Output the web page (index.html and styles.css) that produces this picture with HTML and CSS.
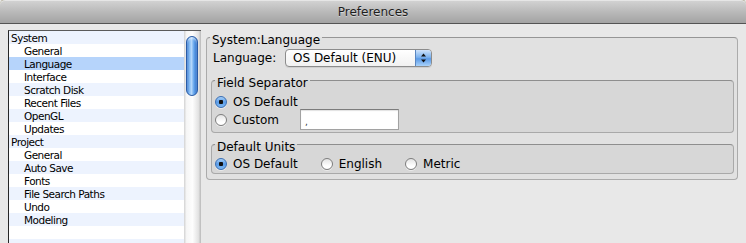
FILE: index.html
```html
<!DOCTYPE html>
<html lang="en">
<head>
    <meta charset="UTF-8">
    <title>Preferences</title>
    <link rel="stylesheet" href="styles.css">
</head>
<body>
    <div class="window">
        <div class="titlebar">Preferences</div>
        <div class="main">
            <div class="sidebar">
                <ul class="tree">
                    <li class="group">System</li>
                    <li>General</li>
                    <li class="selected">Language</li>
                    <li>Interface</li>
                    <li>Scratch Disk</li>
                    <li>Recent Files</li>
                    <li>OpenGL</li>
                    <li>Updates</li>
                    <li class="group">Project</li>
                    <li>General</li>
                    <li>Auto Save</li>
                    <li>Fonts</li>
                    <li>File Search Paths</li>
                    <li>Undo</li>
                    <li>Modeling</li>
                    <li></li>
                    <li></li>
                </ul>
                <div class="scrollbar"><div class="thumb"></div></div>
            </div>

            <div class="panel">
                <fieldset class="group-box">
                    <legend>System:Language</legend>
                    <div class="field-row">
                        <label class="field-label">Language:</label>
                        <div class="popup">
                            <span class="popup-value">OS Default (ENU)</span>
                            <span class="stepper">
                                <svg width="7" height="10" viewBox="0 0 7 10">
                                    <path d="M3.5 0.5 L6 3.5 L1 3.5 Z" fill="#111"/>
                                    <path d="M3.5 9.5 L6 6.5 L1 6.5 Z" fill="#111"/>
                                </svg>
                            </span>
                        </div>
                    </div>

                    <fieldset class="group-box inner separator">
                        <legend>Field Separator</legend>
                        <div class="radio-row first">
                            <span class="radio checked"></span>
                            <span class="radio-text">OS Default</span>
                        </div>
                        <div class="radio-row">
                            <span class="radio"></span>
                            <span class="radio-text">Custom</span>
                            <input class="text-field" type="text" value=",">
                        </div>
                    </fieldset>

                    <fieldset class="group-box inner units">
                        <legend>Default Units</legend>
                        <div class="radio-line">
                            <div class="radio-item">
                                <span class="radio checked"></span>
                                <span class="radio-text">OS Default</span>
                            </div>
                            <div class="radio-item">
                                <span class="radio"></span>
                                <span class="radio-text">English</span>
                            </div>
                            <div class="radio-item">
                                <span class="radio"></span>
                                <span class="radio-text">Metric</span>
                            </div>
                        </div>
                    </fieldset>
                </fieldset>
            </div>
        </div>
    </div>
</body>
</html>
```

FILE: styles.css
```css
html, body {
    margin: 0;
    padding: 0;
    height: 100%;
    overflow: hidden;
}
body {
    font-family: 'DejaVu Sans', sans-serif;
    font-size: 12px;
    color: #000;
    background: #e8e8e8;
}
.window {
    height: 100%;
    display: flex;
    flex-direction: column;
}
.titlebar {
    height: 22px;
    padding-top: 1px;
    line-height: 23px;
    text-align: center;
    color: #1e1e1e;
    text-shadow: 0 1px 0 rgba(255, 255, 255, 0.45);
    background: linear-gradient(#d4d4d4, #bababa 50%, #a3a3a3);
    border-top: 1px solid #b3ae95;
    border-bottom: 1px solid #545454;
    border-radius: 5px 5px 0 0;
    box-shadow: inset 0 1px 0 #e6e6e6;
    flex: none;
    margin-top: -1px;
}
.main {
    flex: 1;
    display: flex;
    align-items: flex-start;
    min-height: 0;
    overflow: hidden;
}

/* source list */
.sidebar {
    margin: 6px 0 0 8px;
    align-self: stretch;
    display: flex;
    overflow: hidden;
    border-left: 1px solid #262626;
    border-top: 1px solid #5a5a5a;
    background: #fff;
}
.tree {
    list-style: none;
    margin: 0;
    padding: 0;
    width: 175px;
    font-size: 10.5px;
    letter-spacing: -0.5px;
}
.tree li {
    height: 12px;
    padding: 1px 0 0 15px;
    line-height: 12px;
    white-space: nowrap;
}
.tree li:nth-child(odd) {
    background: #edf3fe;
}
.tree li.group {
    padding-left: 2px;
}
.tree li.selected {
    background: #b6d4fb;
}
.scrollbar {
    width: 17px;
    background: linear-gradient(90deg, #d2d2d2, #f6f6f6 15%, #fdfdfd 50%, #e2e2e2 85%, #b9b9b9);
    padding-top: 5px;
    box-sizing: border-box;
}
.thumb {
    width: 12px;
    height: 60px;
    margin-left: 2px;
    border-radius: 6px;
    border: 1px solid #2a5ca6;
    box-sizing: border-box;
    background: linear-gradient(90deg, #3a7bd1, #86bcf3 25%, #b4d7fb 45%, #62a4ec 70%, #2c6bc4);
    box-shadow: inset 0 2px 2px rgba(255, 255, 255, 0.5);
}

/* right panel */
.panel {
    margin: 3px 8px 0 5px;
    flex: 1;
}
.group-box {
    margin: 0;
    padding: 0 3px 5px 4px;
    border: 1px solid #ababab;
    border-top-color: #969696;
    border-radius: 4px;
    background: #e1e1e1;
    min-width: 0;
}
.group-box legend {
    padding: 6px 2px 0;
    margin-left: -1px;
    line-height: 14px;
}
.field-row {
    display: flex;
    align-items: center;
    height: 18px;
    margin-top: 2px;
    padding-left: 2px;
}
.field-label {
    width: 72px;
}
.popup {
    width: 147px;
    height: 18px;
    box-sizing: border-box;
    border: 1px solid #8c8c8c;
    border-radius: 4px;
    background: linear-gradient(#ffffff, #f1f1f1);
    display: flex;
    align-items: center;
    justify-content: space-between;
    box-shadow: 0 1px 0 rgba(0, 0, 0, 0.08);
    overflow: hidden;
}
.popup-value {
    padding-left: 7px;
}
.stepper {
    width: 15px;
    height: 16px;
    display: flex;
    align-items: center;
    justify-content: center;
    border-left: 1px solid #5a86c0;
    background: linear-gradient(#cfe3fb, #7db3ef 45%, #5b9ae6 55%, #a9d2fa);
}

.group-box.inner {
    padding: 0 3px 2px 3px;
    border-color: #a9a9a9;
    border-top-color: #8e8e8e;
    background: #d7d7d7;
}
.group-box.inner legend {
    margin-left: 0;
}
.separator {
    margin-top: 3px;
}
.separator .radio-row.first {
    margin-top: 4px;
    height: 15px;
}
.radio-row {
    display: flex;
    align-items: center;
    height: 21px;
}
.units {
    margin-top: 1px;
}
.units.group-box.inner {
    padding-bottom: 1px;
}
.radio-line {
    display: flex;
    align-items: center;
    height: 16px;
    margin-top: 2px;
    gap: 23px;
}
.radio-item {
    display: flex;
    align-items: center;
}
.radio {
    width: 12px;
    height: 12px;
    box-sizing: border-box;
    border-radius: 50%;
    border: 1px solid #7d7d7d;
    background: linear-gradient(#e4e4e4, #ffffff 70%);
    box-shadow: 0 1px 0 rgba(255, 255, 255, 0.5);
    margin-right: 6px;
    flex: none;
}
.radio.checked {
    border-color: #3b6fb4;
    background:
        radial-gradient(circle at 50% 50%, #111 0, #111 2px, transparent 2.5px),
        linear-gradient(#a8d0f7, #5a9ce8 50%, #7fbaf4);
}
.text-field {
    margin: 0 0 0 21px;
    width: 99px;
    height: 21px;
    box-sizing: border-box;
    border: 1px solid #a2a2a2;
    border-top-color: #7c7c7c;
    box-shadow: inset 0 1px 1px rgba(0, 0, 0, 0.12);
    background: #fff;
    padding: 4px 0 0 4px;
    font-family: 'DejaVu Sans', sans-serif;
    font-size: 9px;
    color: #333;
    outline: none;
}
```
